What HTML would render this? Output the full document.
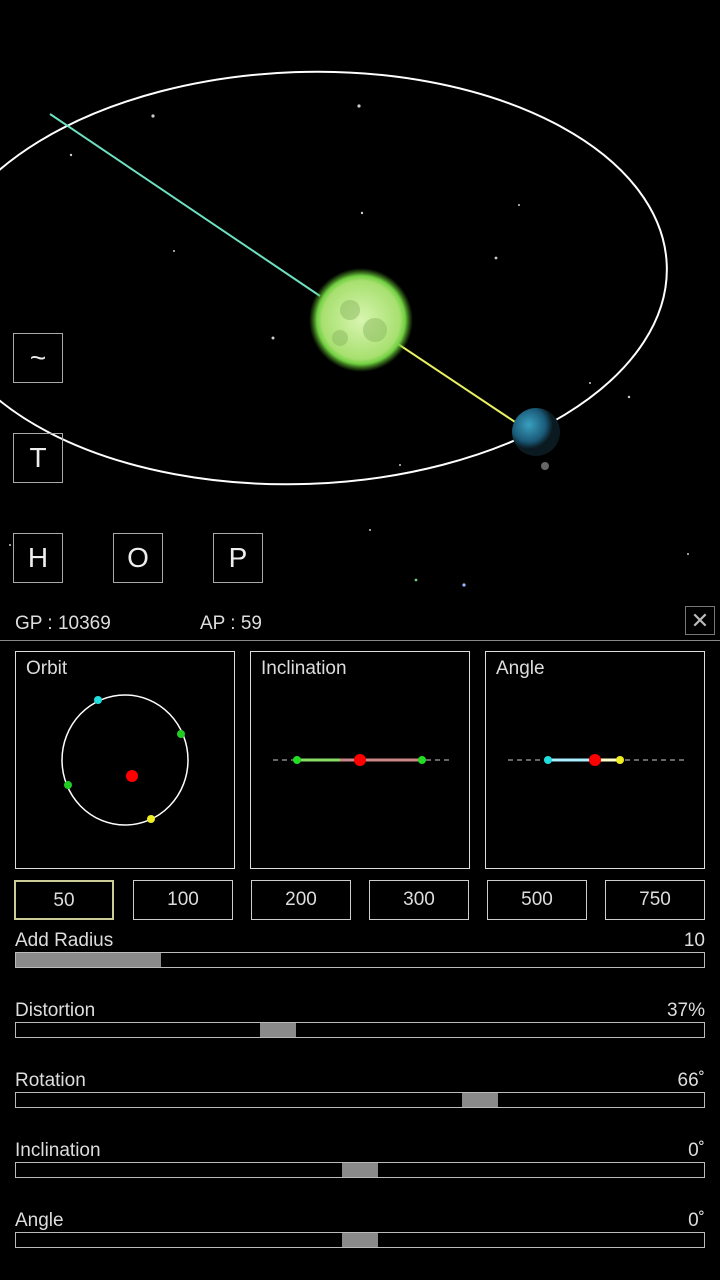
<!DOCTYPE html>
<html><head><meta charset="utf-8"><style>
*{margin:0;padding:0;box-sizing:border-box}
body{width:720px;height:1280px;background:#000;position:relative;overflow:hidden;font-family:"Liberation Sans",sans-serif;color:#ddd}
.a{position:absolute}
.btn{position:absolute;width:50px;height:50px;border:1px solid #aaa;color:#eee;font-size:28px;text-align:center;line-height:48px}
.panel{position:absolute;top:651px;width:220px;height:218px;border:1.5px solid #ddd}
.panel span{position:absolute;left:10px;top:6px;font-size:19px;color:#ddd}
.nb{position:absolute;top:880px;width:100px;height:40px;border:1.5px solid #ccc;font-size:19px;text-align:center;line-height:37px;color:#ddd}
.lab{position:absolute;left:15px;font-size:19px;color:#ddd}
.val{position:absolute;right:15px;font-size:19px;color:#ddd}
.tr{position:absolute;left:15px;width:690px;height:16px;border:1px solid #bbb}
.h{position:absolute;top:0;height:14px;background:#8a8a8a}
</style></head><body>
<svg class="a" style="left:0;top:0" width="720" height="600">
<g fill="#ccc">
<circle cx="153" cy="116" r="1.6"/><circle cx="359" cy="106" r="1.6"/><circle cx="71" cy="155" r="1.2"/><circle cx="362" cy="213" r="1.2"/><circle cx="496" cy="258" r="1.4"/><circle cx="273" cy="338" r="1.5"/><circle cx="590" cy="383" r="1"/><circle cx="629" cy="397" r="1.2"/><circle cx="400" cy="465" r="1"/><circle cx="519" cy="205" r="1"/><circle cx="174" cy="251" r="1"/><circle cx="370" cy="530" r="1"/><circle cx="464" cy="585" r="1.6" fill="#9bf"/><circle cx="416" cy="580" r="1.4" fill="#7c7"/><circle cx="10" cy="545" r="1"/><circle cx="688" cy="554" r="1"/>
</g>
<defs><radialGradient id="s"><stop offset="0" stop-color="#d8f5b0"/><stop offset=".75" stop-color="#a8e070"/><stop offset=".85" stop-color="#70d040"/><stop offset="1" stop-color="#4a9a20" stop-opacity="0"/></radialGradient>
<radialGradient id="p" cx=".35" cy=".35"><stop offset="0" stop-color="#3aa0c0"/><stop offset=".7" stop-color="#1a5a78"/><stop offset="1" stop-color="#0a1a20"/></radialGradient></defs>
<ellipse cx="302" cy="278" rx="365" ry="206" transform="rotate(-2 302 278)" fill="none" stroke="#fff" stroke-width="2"/>
<line x1="50" y1="114" x2="320" y2="296" stroke="#6ee0c0" stroke-width="2"/>
<line x1="395" y1="342" x2="518" y2="424" stroke="#e8f060" stroke-width="2"/>
<circle cx="361" cy="320" r="52" fill="url(#s)"/>
<circle cx="350" cy="310" r="10" fill="#8ab860" opacity=".5"/><circle cx="375" cy="330" r="12" fill="#8ab860" opacity=".5"/><circle cx="340" cy="338" r="8" fill="#8ab860" opacity=".5"/>
<circle cx="536" cy="432" r="24" fill="url(#p)"/>
<circle cx="545" cy="466" r="4" fill="#666"/>
</svg>
<div class="btn" style="left:13px;top:333px">~</div>
<div class="btn" style="left:13px;top:433px">T</div>
<div class="btn" style="left:13px;top:533px">H</div>
<div class="btn" style="left:113px;top:533px">O</div>
<div class="btn" style="left:213px;top:533px">P</div>
<div class="a" style="left:15px;top:613px;font-size:19px">GP : 10369</div>
<div class="a" style="left:200px;top:613px;font-size:19px">AP : 59</div>
<div class="a" style="left:685px;top:606px;width:30px;height:29px;border:1px solid #777;color:#bbb;font-size:22px;text-align:center;line-height:27px">✕</div>
<div class="a" style="left:0;top:640px;width:720px;height:1px;background:#888"></div>
<div class="panel" style="left:15px"><span>Orbit</span></div>
<div class="panel" style="left:250px"><span>Inclination</span></div>
<div class="panel" style="left:485px"><span>Angle</span></div>
<svg class="a" style="left:0;top:640px" width="720" height="240">
<ellipse cx="125" cy="120" rx="63" ry="65" fill="none" stroke="#fff" stroke-width="1.5"/>
<circle cx="132" cy="136" r="6" fill="#f00"/>
<circle cx="98" cy="60" r="4" fill="#2dd"/><circle cx="181" cy="94" r="4" fill="#2c2"/><circle cx="68" cy="145" r="4" fill="#2c2"/><circle cx="151" cy="179" r="4" fill="#ee2"/>
<line x1="273" y1="120" x2="450" y2="120" stroke="#888" stroke-width="1.5" stroke-dasharray="5 4"/>
<line x1="297" y1="120" x2="422" y2="120" stroke="#c88" stroke-width="3"/>
<line x1="297" y1="120" x2="340" y2="120" stroke="#8d6" stroke-width="3"/>
<circle cx="297" cy="120" r="4" fill="#2d2"/><circle cx="422" cy="120" r="4" fill="#2d2"/><circle cx="360" cy="120" r="6" fill="#f00"/>
<line x1="508" y1="120" x2="685" y2="120" stroke="#888" stroke-width="1.5" stroke-dasharray="5 4"/>
<line x1="548" y1="120" x2="594" y2="120" stroke="#aef" stroke-width="3"/>
<line x1="594" y1="120" x2="620" y2="120" stroke="#ffc" stroke-width="3"/>
<circle cx="548" cy="120" r="4" fill="#2dd"/><circle cx="620" cy="120" r="4" fill="#ee2"/><circle cx="595" cy="120" r="6" fill="#f00"/>
</svg>
<div class="nb" style="left:14px;border:2px solid #cc9;">50</div>
<div class="nb" style="left:133px">100</div>
<div class="nb" style="left:251px">200</div>
<div class="nb" style="left:369px">300</div>
<div class="nb" style="left:487px">500</div>
<div class="nb" style="left:605px">750</div>

<div class="lab" style="top:930px">Add Radius</div><div class="val" style="top:930px">10</div>
<div class="tr" style="top:952px"><div class="h" style="left:0;width:145px"></div></div>
<div class="lab" style="top:1000px">Distortion</div><div class="val" style="top:1000px">37%</div>
<div class="tr" style="top:1022px"><div class="h" style="left:244px;width:36px"></div></div>
<div class="lab" style="top:1070px">Rotation</div><div class="val" style="top:1070px">66˚</div>
<div class="tr" style="top:1092px"><div class="h" style="left:446px;width:36px"></div></div>
<div class="lab" style="top:1140px">Inclination</div><div class="val" style="top:1140px">0˚</div>
<div class="tr" style="top:1162px"><div class="h" style="left:326px;width:36px"></div></div>
<div class="lab" style="top:1210px">Angle</div><div class="val" style="top:1210px">0˚</div>
<div class="tr" style="top:1232px"><div class="h" style="left:326px;width:36px"></div></div>
</body></html>
